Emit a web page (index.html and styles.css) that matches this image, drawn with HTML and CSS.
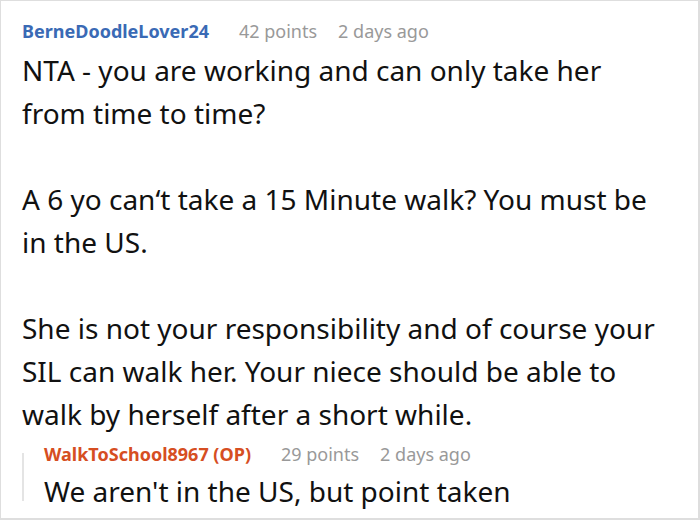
FILE: index.html
```html
<!DOCTYPE html>
<html>
<head>
<meta charset="utf-8">
<link rel="stylesheet" href="styles.css">
</head>
<body>
<div class="card">
  <div class="meta">
    <span class="author">BerneDoodleLover24</span>
    <span class="info">42 points</span>
    <span class="info">2 days ago</span>
  </div>
  <div class="body">
    <p>NTA - you are working and can only take her from time to time?</p>
    <p>A 6 yo can‘t take a 15 Minute walk? You must be in the US.</p>
    <p>She is not your responsibility and of course your SIL can walk her. Your niece should be able to walk by herself after a short while.</p>
  </div>
  <div class="reply">
    <div class="meta">
      <span class="author op">WalkToSchool8967 (OP)</span>
      <span class="info">29 points</span>
      <span class="info">2 days ago</span>
    </div>
    <div class="body reply-body">
      <p>We aren't in the US, but point taken</p>
    </div>
  </div>
</div>
</body>
</html>
```

FILE: styles.css
```css
html, body {
  margin: 0;
  padding: 0;
  background: #fff;
}
.card {
  box-sizing: border-box;
  width: 700px;
  height: 520px;
  border: 1px solid #dedede;
  border-right-width: 2px;
  border-bottom-width: 2px;
  padding: 17px 21px 0 21px;
  font-family: "Noto Sans", "Open Sans", sans-serif;
  color: #111;
  overflow: hidden;
}
.meta {
  display: flex;
  align-items: baseline;
  gap: 21px;
  font-size: 18px;
  line-height: 26px;
}
.author {
  font-weight: bold;
  color: #3a6ab5;
}
.author.op {
  color: #d64e22;
}
.info {
  color: #999;
}
.meta .author {
  margin-right: 9px;
}
.body {
  margin-top: 5px;
  font-size: 28px;
  line-height: 43px;
}
.body p {
  margin: 0 0 43px 0;
  width: 645px;
}
.body p:last-child {
  margin-bottom: 0;
}
.reply {
  position: relative;
  margin-top: 5px;
  padding-left: 22px;
}
.reply::before {
  content: "";
  position: absolute;
  left: 0;
  top: 12px;
  width: 2px;
  height: 48px;
  background: #e4e4e4;
}
.reply-body {
  margin-top: 3px;
}
.reply-body p {
  width: auto;
}
```
